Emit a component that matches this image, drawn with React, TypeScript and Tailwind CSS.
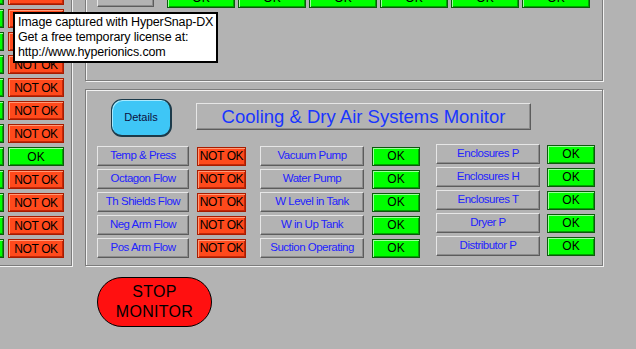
import React from 'react';

const raised =
  'border border-t-[#e6e6e6] border-l-[#e6e6e6] border-r-[#5c5c5c] border-b-[#5c5c5c] shadow-[inset_-1px_-1px_0_#8c8c8c]';

const Label: React.FC<{ text: string; w: string }> = ({ text, w }) => (
  <div className={`flex h-[20px] items-center justify-center whitespace-nowrap bg-[#b3b3b3] text-[11.5px] tracking-[-0.5px] text-[#2222ff] ${raised} ${w}`}>
    {text}
  </div>
);

const NotOk: React.FC<{ w: string; h?: string }> = ({ w, h = 'h-[19px]' }) => (
  <div className={`flex items-center justify-center border border-[#a81c00] bg-[#ff4a1c] text-[12px] tracking-[-0.4px] text-black shadow-[inset_1px_1px_0_#ff9a78,inset_-1px_-1px_0_#c42808] ${w} ${h}`}>
    NOT OK
  </div>
);

const Ok: React.FC<{ w: string; h?: string }> = ({ w, h = 'h-[19px]' }) => (
  <div className={`flex items-center justify-center border border-[#0c5a0c] bg-[#00ff00] text-[12px] text-black shadow-[inset_1px_1px_0_#9cff9c,inset_-1px_-1px_0_#00a400] ${w} ${h}`}>
    OK
  </div>
);

const leftRows = [false, false, false, false, false, false, false, true, false, false, false, false];

const col1 = ['Temp & Press', 'Octagon Flow', 'Th Shields Flow', 'Neg Arm Flow', 'Pos Arm Flow'];
const col2 = ['Vacuum Pump', 'Water Pump', 'W Level in Tank', 'W in Up Tank', 'Suction Operating'];
const col3 = ['Enclosures P', 'Enclosures H', 'Enclosures T', 'Dryer P', 'Distributor P'];

const groove = 'border border-[#7c7c7c] shadow-[inset_1px_1px_0_#f2f2f2,1px_1px_0_#f2f2f2]';

export default function App() {
  return (
    <div className="relative h-[349px] w-[636px] overflow-hidden bg-[#b3b3b3] font-['Liberation_Sans',Arial,sans-serif]">
      <div className="flex items-start">
        {/* left status column, cut off by the window */}
        <div className={`-ml-[56px] -mt-[20px] flex h-[286px] flex-col gap-[4px] pl-[3px] pr-[7px] pt-[5px] ${groove}`}>
          {leftRows.map((ok, i) => (
            <div key={i} className="flex gap-[4px]">
              <Ok w="w-[56px]" />
              {ok ? <Ok w="w-[56px]" /> : <NotOk w="w-[56px]" />}
            </div>
          ))}
        </div>

        <div className="ml-[13px] flex flex-col">
          {/* upper panel, cut off at the top */}
          <div className={`-mt-[30px] h-[111px] w-[518px] ${groove}`}>
            <div className="flex items-start pl-[11px] pt-[16px]">
              <Label text="GND" w="w-[57px]" />
              <div className="ml-[13px] flex gap-[3px]">
                {[0, 1, 2, 3, 4, 5].map((i) => (
                  <Ok key={i} w="w-[68px]" h="h-[21px]" />
                ))}
              </div>
            </div>
          </div>

          {/* Cooling & Dry Air panel */}
          <div className={`mt-[8px] h-[177px] w-[518px] ${groove}`}>
            <div className="flex items-start pl-[25px] pt-[9px]">
              <button className="flex h-[38px] w-[61px] items-center justify-center rounded-[11px] border border-[#1c3a4a] border-b-2 border-r-2 bg-[#3ec6f6] text-[11px] text-[#0c1040] shadow-[inset_1px_1px_0_#a8eaff]">
                Details
              </button>
              <div className={`ml-[24px] mt-[4px] flex h-[27px] w-[335px] items-center justify-center text-[18.5px] text-[#1a36ff] ${raised}`}>
                Cooling &amp; Dry Air Systems Monitor
              </div>
            </div>

            <div className="mt-[9px] flex pl-[11px]">
              <div className="flex flex-col gap-[3px]">
                {col1.map((t) => (
                  <div key={t} className="flex items-center gap-[8px]">
                    <Label text={t} w="w-[92px]" />
                    <NotOk w="w-[49px]" />
                  </div>
                ))}
              </div>
              <div className="ml-[14px] flex flex-col gap-[3px]">
                {col2.map((t) => (
                  <div key={t} className="flex items-center gap-[8px]">
                    <Label text={t} w="w-[104px]" />
                    <Ok w="w-[48px]" />
                  </div>
                ))}
              </div>
              <div className="-mt-[2px] ml-[16px] flex flex-col gap-[3px]">
                {col3.map((t) => (
                  <div key={t} className="flex items-center gap-[7px]">
                    <Label text={t} w="w-[104px]" />
                    <Ok w="w-[48px]" />
                  </div>
                ))}
              </div>
            </div>
          </div>

          <button className="ml-[12px] mt-[11px] flex h-[50px] w-[115px] flex-col items-center justify-center rounded-full border border-black bg-[#ff1010] text-[16px] leading-[20px] tracking-[0.3px] text-black">
            <span>STOP</span>
            <span>MONITOR</span>
          </button>
        </div>
      </div>

      {/* HyperSnap capture notice */}
      <div className="absolute left-[13px] top-[12px] h-[51px] w-[205px] whitespace-nowrap border-2 border-black bg-white pl-[3px] pt-[1px] text-[12.5px] leading-[15px] tracking-[-0.15px] text-black">
        <div>Image captured with HyperSnap-DX</div>
        <div>Get a free temporary license at:</div>
        <div>http://www.hyperionics.com</div>
      </div>
    </div>
  );
}
